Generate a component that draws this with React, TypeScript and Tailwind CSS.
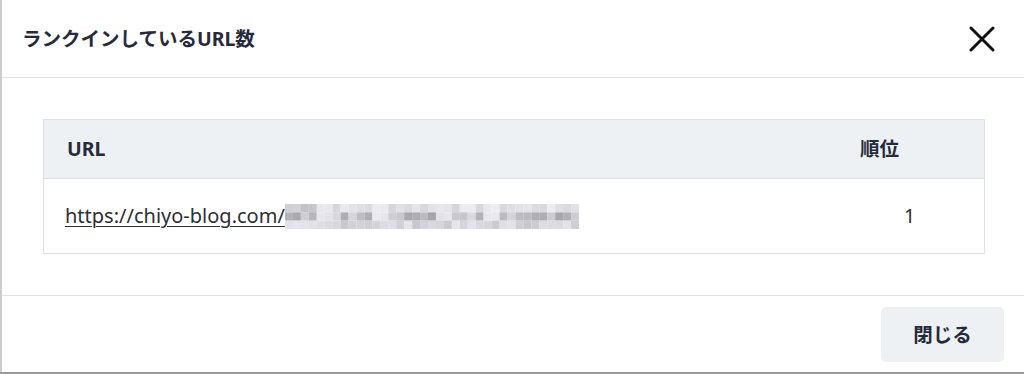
import React from "react";

const font = '"Noto Sans", "Noto Sans CJK JP", sans-serif';

function Pixelated() {
  const cols = 37;
  const rows = 3;
  const cells: React.ReactNode[] = [];
  let seed = 7;
  const rnd = () => {
    seed = (seed * 9301 + 49297) % 233280;
    return seed / 233280;
  };
  const gaps = [4, 5, 11, 12, 19, 20, 25, 26];
  for (let r = 0; r < rows; r++) {
    for (let c = 0; c < cols; c++) {
      let shade: number;
      if (gaps.includes(c) && r !== 2) {
        shade = 226 + Math.floor(rnd() * 12);
      } else if (r === 0) {
        shade = c < 4 ? 190 + Math.floor(rnd() * 35) : 212 + Math.floor(rnd() * 25);
      } else if (r === 1) {
        shade = 160 + Math.floor(rnd() * 60);
      } else {
        shade = 200 + Math.floor(rnd() * 30);
      }
      const b = Math.min(255, shade + 6);
      cells.push(
        <rect
          key={`${r}-${c}`}
          x={c * 8}
          y={r * 8}
          width={8}
          height={8}
          fill={`rgb(${shade},${shade},${b})`}
        />
      );
    }
  }
  return (
    <svg width={294} height={25} viewBox="0 0 296 24" preserveAspectRatio="none" className="block">
      {cells}
    </svg>
  );
}

export default function App() {
  return (
    <div className="w-[1024px] h-[374px] bg-[#9a9a9a] flex flex-col overflow-hidden" style={{ fontFamily: font }}>
      <div className="flex flex-1 min-h-0">
        <div className="w-[2px] bg-[#c9ccd2]" />
        <div className="flex-1 bg-white flex flex-col">
          {/* Header */}
          <div className="h-[78px] flex items-center justify-between pl-[20px] pr-[29px] border-b border-[#e2e2e2]">
            <h2 className="text-[19.5px] font-bold text-[#272a3b]">ランクインしているURL数</h2>
            <button className="w-[26px] h-[26px] flex items-center justify-center" aria-label="close">
              <svg width="26" height="26" viewBox="0 0 26 26">
                <path d="M2 2 L24 24 M24 2 L2 24" stroke="#111" strokeWidth="3" strokeLinecap="round" />
              </svg>
            </button>
          </div>
          {/* Body */}
          <div className="h-[218px] pt-[41px] pl-[41px] pr-[39px] border-b border-[#e2e2e2]">
            <div className="border border-[#dde1e4]">
              <div className="h-[59px] bg-[#edf1f4] border-b border-[#dde1e4] flex items-center">
                <div className="flex-1 pl-[23px] text-[19.5px] font-bold text-[#272a3b]">URL</div>
                <div className="w-[124px] text-[19.5px] font-bold text-[#272a3b]">順位</div>
              </div>
              <div className="h-[74px] flex items-center">
                <div className="flex-1 pl-[21px] flex items-center text-[20px] text-[#2e2e33]">
                  <span className="underline decoration-1 underline-offset-[3px]">https://chiyo-blog.com/</span>
                  <Pixelated />
                </div>
                <div className="w-[80px] text-[19.5px] text-[#2e2e33]">1</div>
              </div>
            </div>
          </div>
          {/* Footer */}
          <div className="flex-1 flex items-start justify-end pt-[11px] pr-[20px]">
            <button className="w-[123px] h-[55px] rounded-[5px] bg-[#edf1f4] text-[19.5px] font-bold text-[#272a3b]">
              閉じる
            </button>
          </div>
        </div>
      </div>
      <div className="h-[2px] bg-[#9a9a9a]" />
    </div>
  );
}
